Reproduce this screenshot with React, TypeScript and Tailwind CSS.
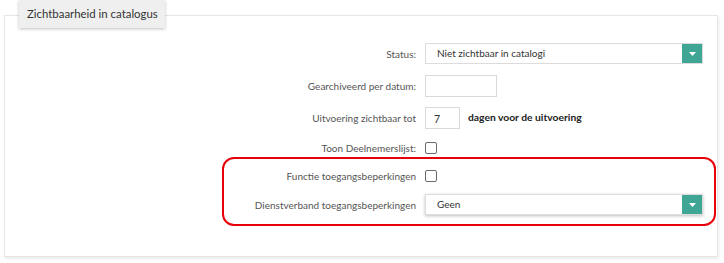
function Caret() {
  return (
    <span className="flex h-full w-[20px] items-center justify-center bg-[#3fa594]">
      <svg width="7" height="4" viewBox="0 0 7 4">
        <path d="M0 0h7L3.5 4z" fill="#fff" />
      </svg>
    </span>
  );
}

function Select({ value, shadow }: { value: string; shadow?: boolean }) {
  return (
    <div
      className={
        'flex h-[21px] w-[278px] items-stretch border border-[#dcdcdc] bg-white ' +
        (shadow ? 'shadow-[0_1px_3px_rgba(0,0,0,0.25)]' : '')
      }
    >
      <span className="flex-1 pl-[11px] text-[10px] leading-[19px] text-[#333]">{value}</span>
      <Caret />
    </div>
  );
}

function Checkbox() {
  return <span className="block h-[12px] w-[12px] rounded-[2px] border border-[#6b6b6b] bg-white" />;
}

function Row({ label, children, className }: { label: string; children: React.ReactNode; className?: string }) {
  return (
    <div className={'grid grid-cols-[411px_1fr] items-center gap-x-[9px] ' + (className ?? '')}>
      <label className="text-right text-[10px] leading-[16px] text-[#555]">{label}</label>
      <div className="flex items-center">{children}</div>
    </div>
  );
}

export default function App() {
  return (
    <div className="h-[263px] w-[724px] bg-white font-['Lato',sans-serif]">
      <div className="relative ml-[4px] w-[714px] pt-[15px]">
        <div className="h-[242px] border border-[#e6e6e6] bg-white shadow-[1px_2px_3px_rgba(0,0,0,0.08)]">
          <div className="flex flex-col pt-[27px]">
            <Row label="Status:">
              <Select value="Niet zichtbaar in catalogi" />
            </Row>
            <Row label="Gearchiveerd per datum:" className="mt-[11px]">
              <span className="block h-[22px] w-[72px] border border-[#d9d9d9] bg-white" />
            </Row>
            <Row label="Uitvoering zichtbaar tot" className="mt-[10px]">
              <span className="block h-[22px] w-[35px] border border-[#d9d9d9] bg-white pl-[8px] text-[10.5px] leading-[22px] text-[#333]">
                7
              </span>
              <span className="ml-[8px] text-[10.3px] font-bold text-[#222]">dagen voor de uitvoering</span>
            </Row>
            <Row label="Toon Deelnemerslijst:" className="mt-[11px]">
              <Checkbox />
            </Row>
            <Row label="Functie toegangsbeperkingen" className="mt-[12px]">
              <Checkbox />
            </Row>
            <Row label="Dienstverband toegangsbeperkingen" className="mt-[10px]">
              <Select value="Geen" shadow />
            </Row>
          </div>
        </div>
        <div className="absolute left-[15px] top-0 flex h-[28px] w-[146px] items-center whitespace-nowrap bg-[#efefef] pl-[8px] text-[11.4px] text-[#333] shadow-[0_1px_3px_rgba(0,0,0,0.25)]">
          Zichtbaarheid in catalogus
        </div>
        <div className="pointer-events-none absolute left-[218px] top-[157px] h-[69px] w-[494px] rounded-[12px] border-2 border-[#e8000b]" />
      </div>
    </div>
  );
}
